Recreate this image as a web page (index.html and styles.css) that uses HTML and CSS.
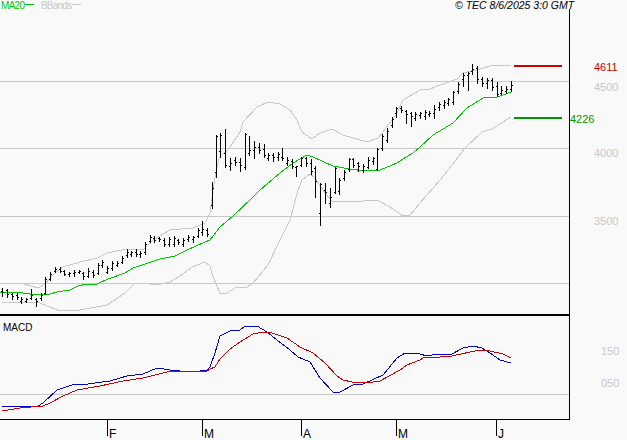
FILE: index.html
```html
<!DOCTYPE html>
<html lang="en">
<head>
<meta charset="utf-8">
<title>TEC chart</title>
<link rel="stylesheet" href="styles.css">
</head>
<body>
<main class="chart">
<svg class="plot" width="627" height="440" viewBox="0 0 627 440" xmlns="http://www.w3.org/2000/svg">
  <g class="grid">
    <path d="M0 81.5H569M0 148.5H569M0 216.5H569M0 283.5H569M0 394.5H569"/>
  </g>
  <g class="axes">
    <path class="axis-main" d="M569.5 9V420M0 419.5H570M107.5 419V436M202.5 419V436M301.5 419V436M396.5 419V436M496.5 419V436"/>
    <path class="axis-split" d="M0 315H570"/>
  </g>
  <polyline class="band" points="24,284 38,288 45,284 50,278 55,273 63,267 80,262 97,258 107,253 127,249 143,250 153,240 170,230 193,228 205,223 210,213 213,190 216,172 219,158 222,155 228,150 240,132 243,122 257,107 268,102 280,104 290,110 297,120 302,132 312,139 320,133 332,129 343,135 367,142 378,138 383,132 397,113 403,100 420,90 430,89 440,85 457,79 463,73 480,69 493,65 511,66"/>
  <polyline class="band" points="2,302 20,302 37,302 50,307 60,311 80,310 107,305 125,293 135,283 143,283 157,285 170,282 183,274 192,267 205,262 210,266 213,277 220,293 227,293 237,287 247,287 253,283 268,265 280,240 290,220 298,190 302,180 310,174 315,178 325,193 332,201 350,202 377,200 390,207 403,216 410,215 420,203 440,180 456,160 465,148 482,132 492,129 511,117"/>
  <polyline class="ma" points="0,292 20,292 23,293 30,294 37,295 50,294 57,292 70,290 78,286 87,284 97,284 108,279 125,273 133,268 145,264 160,259 175,256 187,250 205,242 210,240 220,227 233,216 252,198 260,190 280,173 293,163 307,155 313,157 333,166 350,169 365,171 380,170 397,163 403,159 413,153 420,147 433,135 453,123 467,108 483,98 497,97 503,95 511,92"/>
  <path class="bars" d="M2.5 288V297M1 291.5h1M3 292.5h1M7.5 289V298M6 290.5h1M8 294.5h1M12.5 293V300M11 294.5h1M13 296.5h1M17.5 293V300M16 295.5h1M18 297.5h1M21.5 297V304M20 301.5h1M22 299.5h1M26.5 298V303M25 301.5h1M27 299.5h1M31.5 289V300M30 298.5h1M32 295.5h1M36.5 298V307M35 299.5h1M37 301.5h1M41.5 293V301M40 298.5h1M42 295.5h1M45.5 277V295M44 293.5h1M46 279.5h1M50.5 272V281M49 279.5h1M51 274.5h1M55.5 267V273M54 271.5h1M56 269.5h1M60.5 267V273M59 269.5h1M61 271.5h1M64.5 270V276M63 271.5h1M65 274.5h1M69.5 272V277M68 274.5h1M70 273.5h1M74.5 270V277M73 273.5h1M75 272.5h1M79.5 270V274M78 272.5h1M80 271.5h1M83.5 272V280M82 273.5h1M84 276.5h1M88.5 268V278M87 276.5h1M89 271.5h1M93.5 270V278M92 272.5h1M94 275.5h1M98.5 263V275M97 273.5h1M99 265.5h1M102.5 260V268M101 265.5h1M103 262.5h1M107.5 266V274M106 272.5h1M108 268.5h1M112.5 261V271M111 268.5h1M113 263.5h1M117.5 261V267M116 265.5h1M118 263.5h1M122.5 256V264M121 262.5h1M123 258.5h1M127.5 249V258M126 255.5h1M128 252.5h1M131.5 251V257M130 254.5h1M132 252.5h1M136.5 249V257M135 252.5h1M137 254.5h1M140.5 251V258M139 254.5h1M141 253.5h1M145.5 242V255M144 252.5h1M146 244.5h1M150.5 235V243M149 241.5h1M151 237.5h1M154.5 236V243M153 238.5h1M155 240.5h1M159.5 237V242M158 238.5h1M160 239.5h1M164.5 238V247M163 240.5h1M165 244.5h1M169.5 237V247M168 244.5h1M170 239.5h1M174.5 236V247M173 244.5h1M175 238.5h1M178.5 239V245M177 240.5h1M179 242.5h1M183.5 238V247M182 244.5h1M184 240.5h1M188 235V242M187 239.5h1M189 237.5h1M193.5 236V243M192 239.5h1M194 237.5h1M198.5 228V238M197 236.5h1M199 230.5h1M202.5 221V236M201 232.5h1M203 229.5h1M207.5 228V237M206 230.5h1M208 234.5h1M212.5 182V209M211 205.5h1M213 188.5h1M216.5 135V178M215 172.5h1M217 136.5h1M220.5 133V158M219 151.5h1M221 135.5h1M225.5 129V168M224 153.5h1M226 165.5h1M230.5 158V171M229 166.5h1M231 163.5h1M235.5 157V166M234 160.5h1M236 162.5h1M240.5 158V172M239 162.5h1M241 165.5h1M245.5 133V170M244 167.5h1M246 134.5h1M249.5 136V156M248 153.5h1M250 150.5h1M254.5 141V159M253 150.5h1M255 147.5h1M259.5 143V154M258 147.5h1M260 150.5h1M264.5 144V158M263 149.5h1M265 155.5h1M268.5 153V161M267 158.5h1M269 155.5h1M273.5 153V162M272 155.5h1M274 157.5h1M278.5 152V161M277 157.5h1M279 154.5h1M282.5 148V161M281 157.5h1M283 158.5h1M287.5 157V166M286 163.5h1M288 160.5h1M292.5 159V169M291 161.5h1M293 166.5h1M296.5 166V177M295 167.5h1M297 166.5h1M301.5 157V167M300 165.5h1M302 158.5h1M306.5 157V167M305 158.5h1M307 163.5h1M311 159V175M310 163.5h1M312 171.5h1M315.5 166V198M314 168.5h1M316 181.5h1M320.5 183V226M319 213.5h1M321 184.5h1M325.5 183V204M324 190.5h1M326 192.5h1M330.5 188V208M329 203.5h1M331 197.5h1M335.5 167V194M334 192.5h1M336 168.5h1M339.5 178V195M338 191.5h1M340 180.5h1M344.5 170V181M343 178.5h1M345 172.5h1M349.5 158V172M348 169.5h1M350 159.5h1M353.5 158V168M352 159.5h1M354 165.5h1M358.5 162V172M357 163.5h1M359 166.5h1M363.5 164V173M362 170.5h1M364 166.5h1M368.5 157V169M367 167.5h1M369 160.5h1M373.5 157V165M372 161.5h1M374 158.5h1M377.5 148V171M376 169.5h1M378 149.5h1M382.5 134V151M381 148.5h1M383 136.5h1M387.5 128V143M386 140.5h1M388 131.5h1M392.5 117V128M391 125.5h1M393 119.5h1M396.5 107V118M395 113.5h1M397 108.5h1M401.5 106V113M400 108.5h1M402 110.5h1M406.5 110V124M405 111.5h1M407 114.5h1M411.5 112V127M410 113.5h1M412 116.5h1M415.5 112V121M414 118.5h1M416 114.5h1M420.5 112V119M419 115.5h1M421 113.5h1M425.5 110V120M424 116.5h1M426 112.5h1M429.5 111V117M428 114.5h1M430 113.5h1M434.5 105V119M433 113.5h1M435 109.5h1M439.5 102V111M438 107.5h1M440 104.5h1M444.5 100V109M443 105.5h1M445 102.5h1M448.5 98V106M447 103.5h1M449 99.5h1M453.5 91V105M452 102.5h1M454 92.5h1M458.5 82V94M457 91.5h1M459 84.5h1M463.5 73V87M462 79.5h1M464 75.5h1M468.5 72V91M467 75.5h1M469 73.5h1M472.5 64V75M471 71.5h1M473 69.5h1M477.5 66V84M476 68.5h1M478 79.5h1M482.5 77V87M481 79.5h1M483 83.5h1M487.5 78V89M486 83.5h1M488 80.5h1M492.5 78V91M491 80.5h1M493 87.5h1M497.5 82V97M496 86.5h1M498 94.5h1M501.5 86V95M500 93.5h1M502 90.5h1M506.5 86V94M505 91.5h1M507 89.5h1M511.5 81V92M510 89.5h1M512 85.5h1"/>
  <polyline class="macd-blue" points="2,407 10,406 38,406 43,403 57,390 72,385 88,384 95,383 110,381 127,376 143,374 157,368 170,370 180,371 190,372 200,371 207,370 210,367 215,353 220,336 230,331 240,330 245,326 257,326 267,332 277,340 290,350 298,357 310,362 320,378 333,392 340,392 353,385 363,384 383,375 397,358 405,353 420,354 427,356 437,354 452,354 463,348 473,346 482,348 490,353 500,360 511,363"/>
  <polyline class="macd-red" points="2,411 20,408 43,406 50,403 63,396 77,390 100,386 123,381 143,378 167,372 207,371 210,369 215,367 220,359 230,349 240,342 253,334 263,332 272,333 287,338 300,347 313,353 325,363 337,376 343,380 352,382 367,383 380,381 400,370 407,365 420,360 423,358 440,357 452,356 470,352 480,350 490,351 503,354 511,358"/>
  <path class="level-red" d="M514 66H562"/>
  <path class="level-green" d="M514 118H562"/>
  <text class="t legend-ma" x="1" y="9">MA20</text>
  <path class="legend-ma-line" d="M25 4.5H34"/>
  <text class="t legend-bb" x="41" y="9">BBands</text>
  <path class="legend-bb-line" d="M72 4.5H81"/>
  <text class="stamp" x="455" y="9">© TEC 8/6/2025 3:0 GMT</text>
  <text class="t label-black" x="3" y="331">MACD</text>
  <text class="t price price-red" x="594" y="71">4611</text>
  <text class="t price price-gray" x="594" y="91">4500</text>
  <text class="t price price-gray" x="594" y="157">4000</text>
  <text class="t price price-gray" x="594" y="225">3500</text>
  <text class="t price price-green" x="570" y="123">4226</text>
  <text class="t price price-gray" x="601" y="355">150</text>
  <text class="t price price-gray" x="601" y="387">050</text>
  <text class="month" x="109" y="438">F</text>
  <text class="month" x="204" y="438">M</text>
  <text class="month" x="303" y="438">A</text>
  <text class="month" x="398" y="438">M</text>
  <text class="month" x="498" y="438">J</text>
</svg>
</main>
</body>
</html>
```
FILE: styles.css
```css
html, body {
  margin: 0;
  padding: 0;
  background: #f9f9f9;
}
.chart {
  width: 627px;
  height: 440px;
  overflow: hidden;
}
.plot {
  display: block;
}
.plot path, .plot polyline {
  fill: none;
  shape-rendering: crispEdges;
}
.grid path { stroke: #c8c8c8; stroke-width: 1; }
.axis-main { stroke: #000; stroke-width: 1; }
.axis-split { stroke: #000; stroke-width: 2; }
.band { stroke: #c8c8c8; stroke-width: 1; }
.ma { stroke: #00c800; stroke-width: 1; }
.bars { stroke: #000; stroke-width: 1; }
.macd-blue { stroke: #0000c8; stroke-width: 1; }
.macd-red { stroke: #c80000; stroke-width: 1; }
.level-red { stroke: #c80000; stroke-width: 2; }
.level-green { stroke: #009600; stroke-width: 2; }
.legend-ma-line { stroke: #00c800; stroke-width: 1; }
.legend-bb-line { stroke: #c8c8c8; stroke-width: 1; }
.t {
  font-family: "Liberation Sans", Arial, sans-serif;
  font-size: 10px;
}
.legend-ma { fill: #00c800; letter-spacing: -0.7px; }
.legend-bb { fill: #c8c8c8; letter-spacing: -0.8px; }
.label-black { fill: #000; }
.stamp {
  font-family: "Liberation Sans", Arial, sans-serif;
  font-size: 10.5px;
  font-style: italic;
  fill: #000;
}
.price { font-size: 11px; }
.price-red { fill: #c80000; }
.price-gray { fill: #c8c8c8; }
.price-green { fill: #009600; }
.month {
  font-family: "Liberation Sans", Arial, sans-serif;
  font-size: 12px;
  fill: #000;
}
```
